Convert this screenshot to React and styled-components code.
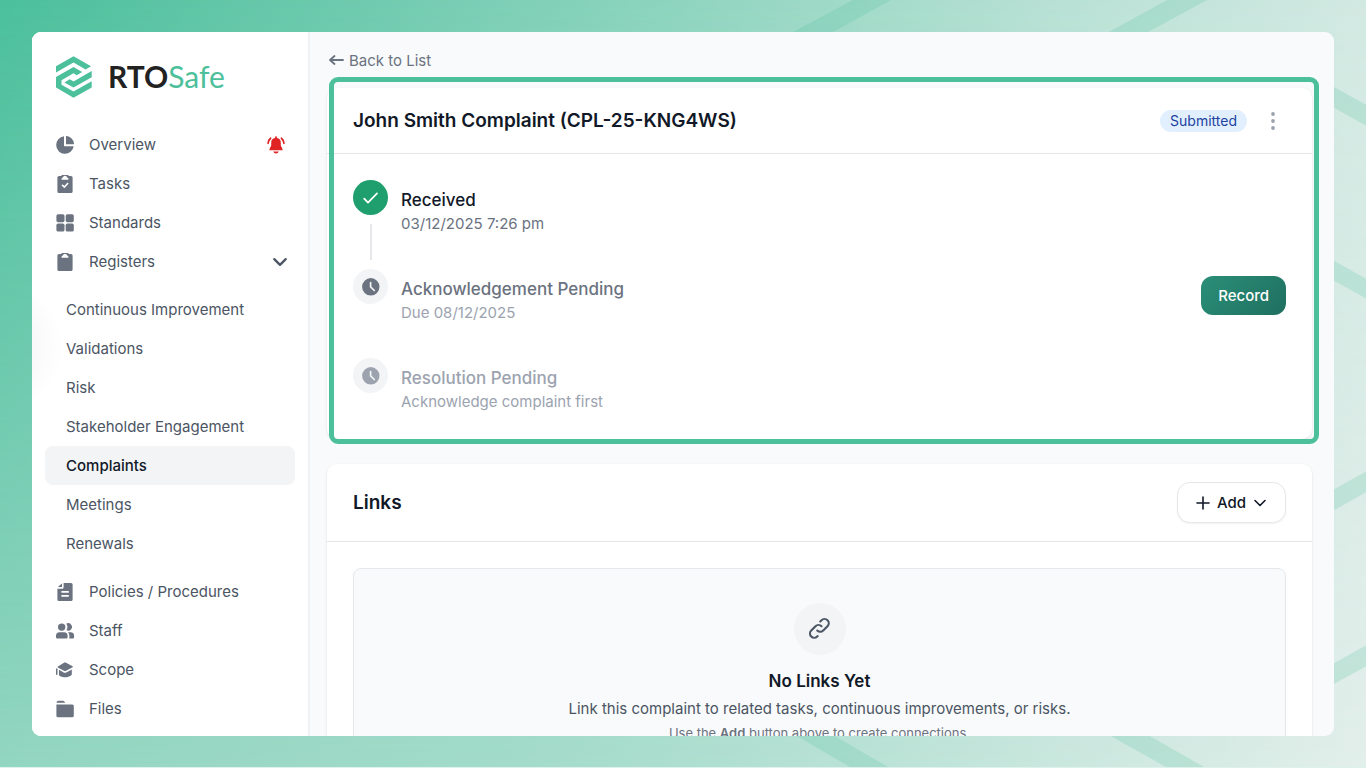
import styled, { createGlobalStyle, css } from "styled-components";

const GlobalStyle = createGlobalStyle`
  *, *::before, *::after {
    box-sizing: border-box;
  }
  body {
    margin: 0;
    font-family: Inter, "Liberation Sans", sans-serif;
    font-size: 15px;
    color: #111827;
  }
  button, a {
    font: inherit;
    color: inherit;
    text-decoration: none;
  }
  h1, h2, h3, p, ul, ol {
    margin: 0;
    padding: 0;
    list-style: none;
  }
`;

const Page = styled.div`
  position: relative;
  display: flex;
  height: 100vh;
  padding: 32px;
  border-bottom: 1px solid #dcf2eb;
  background: linear-gradient(90deg, #93d6c1, #a5dccb 41%, #bce3d7 65%, #e3efeb);

  &::before {
    content: "";
    position: absolute;
    inset: 0;
    background: linear-gradient(90deg, #4bbf9b, #90d5bf 51%, #b9e1d5 78%, #d2e9e2);
    mask-image: linear-gradient(#000, transparent);
  }
`;

const Stripes = styled.svg`
  position: absolute;
  inset: 0;
  width: 100%;
  height: 100%;
`;

const Window = styled.div`
  position: relative;
  flex: 1;
  display: flex;
  min-width: 0;
  margin-bottom: -1px;
  border-radius: 9px;
  overflow: hidden;
  background: #f9fafb;
`;

/* sidebar */

const Sidebar = styled.aside`
  flex: none;
  width: 278px;
  padding: 24px 13px 0;
  border-right: 2px solid #f0f1f4;
  background: radial-gradient(circle 70px at -40px 315px, #efefef, #fff) #fff;
`;

const Brand = styled.a`
  display: flex;
  align-items: center;
  gap: 15px;
  height: 41px;
  margin: 0 0 28px 10px;
  font-family: Lato, sans-serif;
  font-size: 30px;
  font-weight: 400;
  line-height: 41px;
  color: #4cbf9b;

  b {
    font-weight: 700;
    color: #222;
  }
`;

const NavList = styled.ul`
  display: flex;
  flex-direction: column;
`;

const SubList = styled(NavList)`
  margin: 9px 0;
`;

const navRow = css`
  display: flex;
  align-items: center;
  width: 100%;
  height: 39px;
  border: 0;
  border-radius: 8px;
  background: none;
  color: #4b5563;
  text-align: left;
`;

const NavItem = styled.a`
  ${navRow}
  gap: 14px;
  padding: 0 7px 0 10px;

  & > span {
    flex: 1;
  }
`;

const SubItem = styled.a`
  ${navRow}
  padding: 0 21px;
  ${(p) =>
    p.$active &&
    css`
      background: #f3f4f6;
      color: #111827;
      font-weight: 500;
    `}
`;

const NavIcon = styled.svg`
  flex: none;
  width: 20px;
  height: 20px;
  color: #6b7280;
`;

/* main column */

const Main = styled.main`
  flex: 1;
  min-width: 0;
  padding: 16px 22px 0 17px;
`;

const BackLink = styled.a`
  display: inline-flex;
  align-items: center;
  gap: 5px;
  height: 24px;
  padding-left: 2px;
  color: #6b7280;
`;

const Card = styled.section`
  position: relative;
  margin-top: ${(p) => p.$top}px;
  border-radius: 10px;
  background: #fff;
  box-shadow: 0 1px 3px rgba(0, 0, 0, 0.1);
`;

const Highlight = styled.div`
  position: absolute;
  inset: -11px -7px -5px 2px;
  border: 5px solid #4cbf9b;
  border-radius: 9px;
  pointer-events: none;
`;

const CardHeader = styled.header`
  display: flex;
  align-items: center;
  justify-content: space-between;
  padding: 18px 26px;
  border-bottom: 1px solid #e5e7eb;
`;

const Title = styled.h1`
  font-size: 19px;
  line-height: 29px;
  font-weight: 600;
`;

const HeaderActions = styled.div`
  display: flex;
  align-items: center;
  gap: 13px;
`;

const Badge = styled.span`
  padding: 0 10px;
  border-radius: 11px;
  background: #e1effe;
  color: #1e429f;
  font-size: 14px;
  line-height: 22px;
`;

const IconButton = styled.button`
  display: flex;
  padding: 0;
  border: 0;
  background: none;
  color: #9ca3af;
`;

const Steps = styled.ol`
  padding: 26px;
`;

const Step = styled.li`
  display: flex;
  gap: 13px;
`;

const Marker = styled.div`
  display: flex;
  flex-direction: column;
  align-items: center;
`;

const Dot = styled.span`
  display: flex;
  align-items: center;
  justify-content: center;
  width: 35px;
  height: 35px;
  border-radius: 50%;
  background: ${(p) => (p.$done ? "#1f9f6e" : "#f3f4f6")};
  color: ${(p) => p.$color};
`;

const Line = styled.span`
  flex: 1;
  width: 2px;
  margin: 9px 0;
  background: #e5e7eb;
`;

const StepBody = styled.div`
  flex: 1;
  display: flex;
  align-items: flex-start;
  justify-content: space-between;
  padding: 7px 0 ${(p) => (p.$last ? 0 : 34)}px;
`;

const StepTitle = styled.h3`
  font-size: 17px;
  line-height: 26px;
  font-weight: 500;
  color: ${(p) => p.$color};
`;

const StepNote = styled.p`
  line-height: 22px;
  color: ${(p) => p.$color};
`;

const RecordButton = styled.button`
  height: 39px;
  padding: 0 17px;
  border: 0;
  border-radius: 12px;
  background: linear-gradient(135deg, #2a8f78, #1f6f5f);
  color: #fff;
  font-weight: 500;
`;

const AddButton = styled.button`
  display: flex;
  align-items: center;
  gap: 7px;
  height: 41px;
  padding: 0 18px;
  border: 1px solid #e5e7eb;
  border-radius: 13px;
  background: #fff;
  box-shadow: 0 1px 2px rgba(0, 0, 0, 0.05);
  font-weight: 500;
`;

const EmptyState = styled.div`
  display: flex;
  flex-direction: column;
  align-items: center;
  margin: 26px;
  padding: 34px 26px;
  border: 1px solid #e5e7eb;
  border-radius: 8px;
  background: #f9fafb;
  text-align: center;
`;

const EmptyIcon = styled.span`
  display: flex;
  align-items: center;
  justify-content: center;
  width: 52px;
  height: 52px;
  margin-bottom: 13px;
  border-radius: 50%;
  background: #f3f4f6;
  color: #4b5563;
`;

const EmptyTitle = styled.h3`
  font-size: 17px;
  line-height: 26px;
  font-weight: 600;
`;

const EmptyText = styled.p`
  margin-top: 4px;
  line-height: 22px;
  color: #4b5563;
`;

const EmptyHint = styled.p`
  margin-top: 4px;
  font-size: 13px;
  line-height: 18px;
  color: #6b7280;

  strong {
    font-weight: 600;
  }
`;

const icons = {
  pie: (
    <path d="M9 1.300a8.800 8.800 0 1 0 9.700 9.900H9.600a.6.600 0 0 1-.6-.6V1.300Zm2-.3v8.200h7.500a.5.500 0 0 0 .5-.6A8.200 8.200 0 0 0 11.500 1a.5.500 0 0 0-.5 0Z" />
  ),
  tasks: (
    <path
      fillRule="evenodd"
      d="M7.500 1h5a1.500 1.500 0 0 1 1.400 1H16a1.600 1.600 0 0 1 1.600 1.600v13.800A1.600 1.600 0 0 1 16 19H4a1.600 1.600 0 0 1-1.600-1.600V3.600A1.600 1.600 0 0 1 4 2h2.100a1.500 1.500 0 0 1 1.400-1Zm.4 2.300L6.500 4.800v1h7v-1l-1.400-1.500a2.200 2.200 0 0 0-4.200 0Zm5.800 6.200-1.200-1.100-3.200 3.500-1.700-1.600-1.100 1.200 2.900 2.700 4.300-4.700Z"
    />
  ),
  grid: (
    <>
      <rect x="1.400" y="1.200" width="8.100" height="8.100" rx="1.700" />
      <rect x="10.700" y="1.200" width="8.100" height="8.100" rx="1.700" />
      <rect x="1.400" y="10.500" width="8.100" height="8.100" rx="1.700" />
      <rect x="10.700" y="10.500" width="8.100" height="8.100" rx="1.700" />
    </>
  ),
  clipboard: (
    <path
      fillRule="evenodd"
      d="M7.500 1h5a1.500 1.500 0 0 1 1.400 1H16a1.600 1.600 0 0 1 1.600 1.600v13.800A1.600 1.600 0 0 1 16 19H4a1.600 1.600 0 0 1-1.600-1.600V3.600A1.600 1.600 0 0 1 4 2h2.100a1.500 1.500 0 0 1 1.400-1Zm.4 2.300L6.500 4.800v1h7v-1l-1.400-1.500a2.200 2.200 0 0 0-4.200 0Z"
    />
  ),
  file: (
    <path
      fillRule="evenodd"
      d="M8.600 1v4.200a1.500 1.500 0 0 1-1.500 1.500H2.400v10.700A1.600 1.600 0 0 0 4 19h12a1.600 1.600 0 0 0 1.600-1.600V2.600A1.600 1.600 0 0 0 16 1H8.600ZM7 1.400 2.800 5.100h3.700a.5.5 0 0 0 .5-.5V1.400ZM6.400 9h7.400v1.700H6.400V9Zm0 4.100h7.400v1.700H6.400v-1.700Z"
    />
  ),
  users: (
    <>
      <circle cx="6.700" cy="6.100" r="3.700" />
      <path d="M4.500 11.300h4.600a3.500 3.500 0 0 1 3.500 3.500v1.400a1.300 1.300 0 0 1-1.300 1.300h-9A1.300 1.300 0 0 1 1 16.200v-1.400a3.500 3.500 0 0 1 3.500-3.500ZM11.400 9.100a5.300 5.300 0 0 0-.2-6.300 3.700 3.700 0 1 1 .2 6.300ZM14 17.500a3 3 0 0 0 .4-1.300v-1.400a5.200 5.200 0 0 0-1.500-3.500h2.700a3.500 3.500 0 0 1 3.500 3.500v1.400a1.300 1.300 0 0 1-1.300 1.300H14Z" />
    </>
  ),
  cap: (
    <path d="M9.400 2.600a1.500 1.500 0 0 1 1.200 0l7 3.700a.5.500 0 0 1 0 .9l-7 3.700a1.500 1.500 0 0 1-1.200 0L2.900 7.500a.6.6 0 0 1 0-1l6.500-3.900ZM1 8.600h1.500v6.100H1V8.600Zm3 1.200 4.700 2.700a2.700 2.700 0 0 0 2.600 0L16.800 9.400v4.900c0 1.200-2.900 3-6.500 3S4 15.900 4 14.700V9.800Z" />
  ),
  folder: (
    <path d="M1.400 3.700A2.200 2.200 0 0 1 3.600 1.700h4.200a2 2 0 0 1 1.500.7l1 1.300H1.400Zm0 1.700h15.900a1.500 1.500 0 0 1 1.500 1.500v9.800a1.500 1.500 0 0 1-1.500 1.500H2.900a1.500 1.500 0 0 1-1.500-1.500V5.400Z" />
  ),
};

const Icon = ({ name }) => (
  <NavIcon viewBox="0 0 20 20" fill="currentColor" aria-hidden="true">
    {icons[name]}
  </NavIcon>
);

const LogoMark = () => (
  <svg width="38" height="42" viewBox="0 0 38 42" fill="#4cbf9b">
    <path d="M1 10.300 18.500.200 36 10.300 30.600 13.600 18.500 6.500 1 16.500Z" />
    <path d="M1 21 18.500 11 27.200 16 21.800 19.200 18.500 17.300 6.500 24.200V28.800L18.500 35.600 36.700 25.200V31.400L18.500 41.700 1 31.500Z" />
    <path d="M36.700 15V21.200L18.500 31.600 9.400 26.400 14.800 23.300 18.500 25.400Z" />
  </svg>
);

const Bell = () => (
  <svg width="24" height="20" viewBox="-2 0 24 20" fill="#e02424">
    <path d="M10 1.200a.9.900 0 0 1 .9.900v1a4.600 4.600 0 0 1 3.900 4.600v2.600c0 1.500 1.700 2.500 1.700 4v1H3.500v-1c0-1.500 1.700-2.500 1.700-4V7.700a4.600 4.600 0 0 1 3.900-4.600v-1a.9.900 0 0 1 .9-.9ZM7.200 16.500h5.600a3 3 0 0 1-5.600 0Z" />
    <path
      d="M4.600 3.200C3 4.400 2.200 6 2.100 8.300M15.400 3.200c1.600 1.200 2.400 2.800 2.500 5.100"
      fill="none"
      stroke="#e02424"
      strokeWidth="1.700"
      strokeLinecap="round"
    />
  </svg>
);

const Chevron = ({ size, width }) => (
  <svg
    width={size}
    height={size}
    viewBox="0 0 14 14"
    fill="none"
    stroke="currentColor"
    strokeWidth={width}
    strokeLinecap="round"
    strokeLinejoin="round"
  >
    <path d="m2 4.500 5 5 5-5" />
  </svg>
);

const Check = () => (
  <svg width="18" height="18" viewBox="0 0 18 18" fill="none" stroke="currentColor">
    <path d="m2.200 9.600 3.800 4 9-9.200" strokeWidth="1.800" strokeLinecap="round" strokeLinejoin="round" />
  </svg>
);

const Clock = () => (
  <svg width="18" height="18" viewBox="0 0 18 18">
    <circle cx="8.800" cy="8.800" r="8.700" fill="currentColor" />
    <path d="M8.600 4.600v4.200l3.700 3.700" fill="none" stroke="#f3f4f6" strokeWidth="1.700" strokeLinecap="round" />
  </svg>
);

const topItems = [
  { label: "Overview", icon: "pie", alert: true },
  { label: "Tasks", icon: "tasks" },
  { label: "Standards", icon: "grid" },
];

const registers = [
  "Continuous Improvement",
  "Validations",
  "Risk",
  "Stakeholder Engagement",
  "Complaints",
  "Meetings",
  "Renewals",
];

const bottomItems = [
  { label: "Policies / Procedures", icon: "file" },
  { label: "Staff", icon: "users" },
  { label: "Scope", icon: "cap" },
  { label: "Files", icon: "folder" },
];

const steps = [
  {
    title: "Received",
    note: "03/12/2025 7:26 pm",
    done: true,
    colors: ["#fff", "#111827", "#6b7280"],
  },
  {
    title: "Acknowledgement Pending",
    note: "Due 08/12/2025",
    action: "Record",
    colors: ["#6b7280", "#6b7280", "#9ca3af"],
  },
  {
    title: "Resolution Pending",
    note: "Acknowledge complaint first",
    colors: ["#9ca3af", "#9ca3af", "#9ca3af"],
  },
];

const renderItem = ({ label, icon, alert }) => (
  <li key={label}>
    <NavItem href="#">
      <Icon name={icon} />
      <span>{label}</span>
      {alert && <Bell />}
    </NavItem>
  </li>
);

function SideNav() {
  return (
    <Sidebar>
      <Brand href="#">
        <LogoMark />
        <span>
          <b>RTO</b>Safe
        </span>
      </Brand>
      <nav>
        <NavList>
          {topItems.map(renderItem)}
          <li>
            <NavItem as="button" type="button" aria-expanded="true">
              <Icon name="clipboard" />
              <span>Registers</span>
              <Chevron size={16} width={2} />
            </NavItem>
            <SubList>
              {registers.map((name) => (
                <li key={name}>
                  <SubItem href="#" $active={name === "Complaints"}>
                    {name}
                  </SubItem>
                </li>
              ))}
            </SubList>
          </li>
          {bottomItems.map(renderItem)}
        </NavList>
      </nav>
    </Sidebar>
  );
}

function Timeline() {
  return (
    <Steps>
      {steps.map(({ title, note, done, action, colors }, i) => (
        <Step key={title}>
          <Marker>
            <Dot $done={done} $color={colors[0]}>
              {done ? <Check /> : <Clock />}
            </Dot>
            {done && <Line />}
          </Marker>
          <StepBody $last={i === steps.length - 1}>
            <div>
              <StepTitle $color={colors[1]}>{title}</StepTitle>
              <StepNote $color={colors[2]}>{note}</StepNote>
            </div>
            {action && <RecordButton type="button">{action}</RecordButton>}
          </StepBody>
        </Step>
      ))}
    </Steps>
  );
}

function App() {
  return (
    <>
      <GlobalStyle />
      <Page>
        <Stripes viewBox="0 0 1366 768" preserveAspectRatio="none" fill="#4cbf9b" fillOpacity="0.2">
          <path d="M853 0h38l-58 32h-40ZM1167 0h40l-59 32h-39Z" />
          <path d="M1334 87l32 18v21l-32-18ZM1334 261l32 18v20l-32-18Z" />
          <path d="M1334 490l32-18v21l-32 18ZM1334 664l32-18v21l-32 18Z" />
          <path d="M795 736h38l55 32h-38ZM1109 736h39l56 32h-38Z" />
        </Stripes>
        <Window>
          <SideNav />
          <Main>
            <BackLink href="#">
              <svg width="15" height="14" viewBox="0 0 15 14" fill="none" stroke="currentColor">
                <path
                  d="M14 7H1m4.500-4L1 7l4.500 4"
                  strokeWidth="1.800"
                  strokeLinecap="round"
                  strokeLinejoin="round"
                />
              </svg>
              Back to List
            </BackLink>
            <Card $top={16}>
              <CardHeader>
                <Title>John Smith Complaint (CPL-25-KNG4WS)</Title>
                <HeaderActions>
                  <Badge>Submitted</Badge>
                  <IconButton type="button" aria-label="More actions">
                    <svg width="26" height="22" viewBox="0 0 26 22" fill="currentColor">
                      <circle cx="13" cy="4" r="1.900" />
                      <circle cx="13" cy="11" r="1.900" />
                      <circle cx="13" cy="18" r="1.900" />
                    </svg>
                  </IconButton>
                </HeaderActions>
              </CardHeader>
              <Timeline />
              <Highlight />
            </Card>
            <Card $top={25}>
              <CardHeader>
                <Title as="h2">Links</Title>
                <AddButton type="button">
                  <svg width="14" height="14" viewBox="0 0 14 14" fill="none" stroke="currentColor">
                    <path d="M7 1v12M1 7h12" strokeWidth="1.600" strokeLinecap="round" />
                  </svg>
                  Add
                  <Chevron size={14} width={1.6} />
                </AddButton>
              </CardHeader>
              <EmptyState>
                <EmptyIcon>
                  <svg
                    width="30"
                    height="30"
                    viewBox="0 0 24 24"
                    fill="none"
                    stroke="currentColor"
                    strokeWidth="1.700"
                    strokeLinecap="round"
                    strokeLinejoin="round"
                  >
                    <path d="M13.213 9.787a3.391 3.391 0 0 0-4.795 0l-3.425 3.426a3.390 3.390 0 0 0 4.795 4.794l.321-.304m-.321-4.490a3.390 3.390 0 0 0 4.795 0l3.424-3.426a3.390 3.390 0 0 0-4.794-4.795l-1.028.961" />
                  </svg>
                </EmptyIcon>
                <EmptyTitle>No Links Yet</EmptyTitle>
                <EmptyText>
                  Link this complaint to related tasks, continuous improvements, or risks.
                </EmptyText>
                <EmptyHint>
                  Use the <strong>Add</strong> button above to create connections.
                </EmptyHint>
              </EmptyState>
            </Card>
          </Main>
        </Window>
      </Page>
    </>
  );
}

export default App;
